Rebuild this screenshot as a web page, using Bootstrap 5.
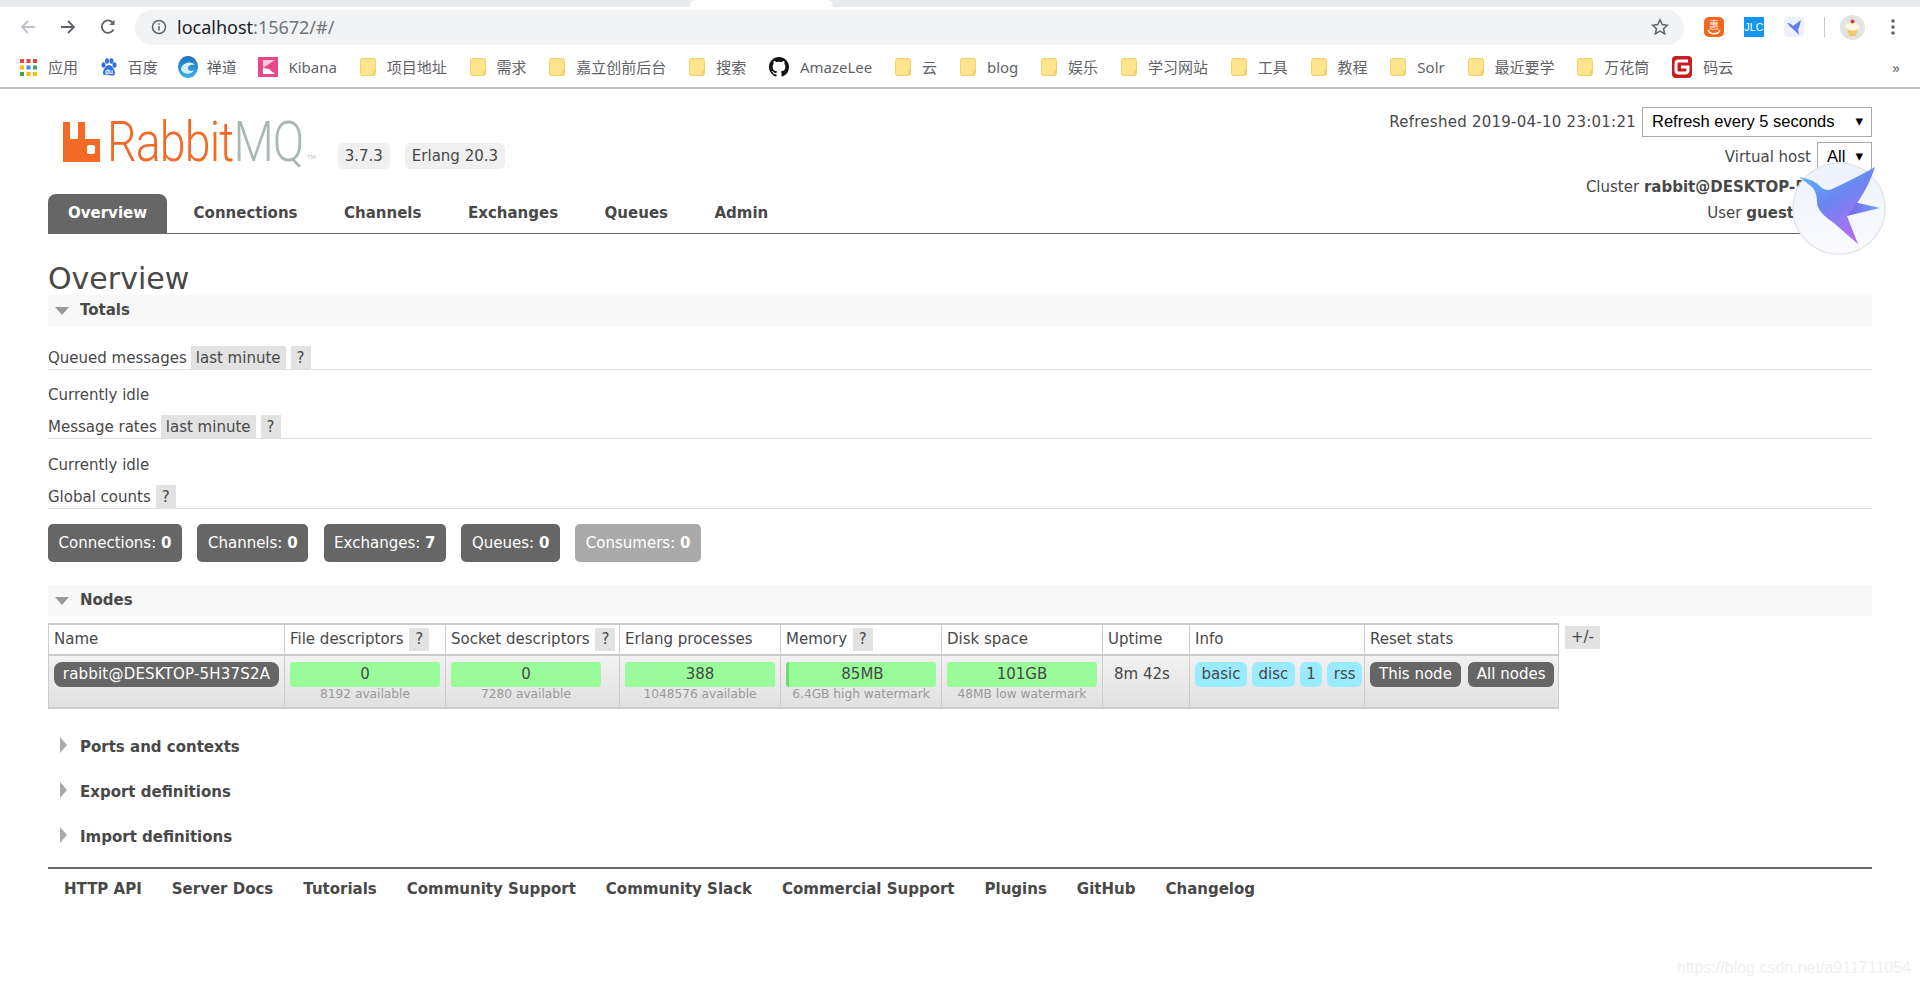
<!DOCTYPE html>
<html lang="en">
<head>
  <meta charset="UTF-8">
  <title>RabbitMQ Management</title>
  <meta name="viewport" content="width=device-width, initial-scale=1">
  <link href="https://cdn.jsdelivr.net/npm/bootstrap@5.3.0/dist/css/bootstrap.min.css" rel="stylesheet">
  <style>
    body { font-family: "DejaVu Sans", Verdana, sans-serif; font-size: 15px; color: #484848; background: #fff; height: 986px; overflow: hidden; position: relative; }

    /* browser chrome */
    .tabstrip { height: 7px; background: #e8eaed; padding-left: 690px; }
    .tabstrip span { display: block; width: 143px; height: 7px; background: #fff; border-radius: 6px 6px 0 0; }
    .toolbar { height: 40px; padding-left: 20px; }
    .tool-ico { width: 16px; height: 16px; margin-right: 24px; flex: none; }
    .urlbar { width: 1549px; height: 35px; margin-left: -5px; background: #f1f3f4; border-radius: 18px; padding: 0 15px 0 16px; font-family: "Noto Sans", sans-serif; font-size: 18px; color: #202124; flex: none; }
    .urlbar em { font-style: normal; color: #70757a; }
    .url-txt { margin-left: 10px; }
    .ext-gap { margin-left: 20px; flex: none; }
    .ext-sep { width: 1px; height: 20px; background: #c4c7ca; margin-left: 20px; flex: none; }
    .ava-ico { margin-left: 15px; flex: none; }
    .dots-ico { margin-left: 26px; flex: none; }
    .bookbar { height: 42px; border-bottom: 2px solid #bdbdbd; padding-left: 20px; padding-right: 20px; gap: 22.8px; font-family: "Noto Sans", "Noto Sans CJK SC", sans-serif; font-size: 15px; color: #5f6368; white-space: nowrap; }
    .bm { gap: 11px; }
    .bm svg { flex: none; }
    .bm-zd { gap: 9px; margin-left: -3px; }
    .bm-kb { gap: 10px; margin-left: -1px; }

    /* page */
    .wrap { padding: 0 48px; }
    .top-area { height: 105px; position: relative; }
    .logo-box { padding: 33px 0 0 15px; }
    .logo-text { display: inline-block; width: 199px; white-space: nowrap; transform: scaleX(.83); transform-origin: left center; font-family: Roboto, "Liberation Sans", sans-serif; font-weight: 300; font-size: 56px; line-height: 40px; letter-spacing: -1px; color: #f26a25; margin-left: 7px; }
    .logo-text i { font-style: normal; color: #a9b8b2; }
    .logo-tm { font-size: 6px; line-height: 10px; color: #b5bfba; align-self: flex-end; margin-left: 1px; font-family: "Liberation Sans", sans-serif; }
    .ver-pill { background: #f0f0f0; border-radius: 5px; padding: 0 7px; line-height: 26px; font-size: 15px; margin-top: 21px; }
    .ver-gap { gap: 15px; margin-left: 22px; }
    .right-info { text-align: right; line-height: 20px; padding-top: 18px; }
    .right-info > div { display: flex; justify-content: flex-end; align-items: center; }
    .stamp-txt { letter-spacing: .25px; }
    .sel-wrap { position: relative; display: inline-block; margin-left: 6px; }
    .sel-wrap select { appearance: none; border: 1px solid #aaa; border-radius: 0; background: #fff; font-family: "Liberation Sans", sans-serif; font-size: 16.5px; color: #000; padding: 0 0 2px 9px; height: 30px; display: block; }
    .sel-wrap::after { content: "\25BE"; position: absolute; right: 9px; top: 4px; font-size: 15px; color: #000; pointer-events: none; }
    .sel-refresh select { width: 230px; }
    .sel-vhost select { width: 55px; }
    .ln-vhost { margin-top: 5px; }
    .ln-cluster { margin-top: 5px; }
    .ln-user { margin-top: 6px; padding-right: 78px; }

    .tabs-row { border-bottom: 1px solid #666; height: 40px; gap: 6.5px; }
    .tabs-row a { display: block; padding: 0 20px; line-height: 38px; font-weight: 700; color: #484848; text-decoration: none; }
    .tabs-row a.on { background: #666; color: #fff; border-radius: 8px 8px 0 0; height: 40px; }

    h1.pg-title { font-size: 30px; font-weight: 400; color: #484848; line-height: 33px; margin: 28px 0 0; }
    .sec-head { background: #f8f8f8; height: 31px; line-height: 31px; font-weight: 700; padding-left: 32px; position: relative; }
    .sec-head::before { content: ""; position: absolute; left: 7px; top: 12px; border-left: 7px solid transparent; border-right: 7px solid transparent; border-top: 8px solid #999; }
    .sec-shut { font-weight: 700; height: 45px; line-height: 45px; padding-left: 32px; position: relative; }
    .sec-shut::before { content: ""; position: absolute; left: 12px; top: 12px; border-top: 8px solid transparent; border-bottom: 8px solid transparent; border-left: 7px solid #aaa; }
    .sub-head { border-bottom: 1px solid #e0e0e0; height: 24px; line-height: 25px; gap: 4px; }
    .first-sub { margin-top: 20px; }
    .hint { background: #e2e2e2; padding: 0 5px; line-height: 23px; display: inline-block; height: 23px; }
    .sub-head .hint { line-height: 25px; }
    .hint-q { margin-left: 1px; padding: 0 6px; }
    .idle-line { line-height: 20px; margin: 15px 0 10px; }
    .stat-row { gap: 15.5px; margin-top: 15px; margin-bottom: 23px; }
    .stat-btn { background: #666; color: #fff; border-radius: 5px; line-height: 38px; padding: 0 10.5px; white-space: nowrap; }
    .stat-btn.dim { background: #aaa; }

    .nodes-wrap { margin-top: 7px; gap: 6px; align-items: flex-start; }
    table.node-tbl { width: 1510px; table-layout: fixed; border-collapse: collapse; margin: 0; border: 1px solid #ccc; border-top-width: 2px; border-bottom-width: 2px; flex: none; }
    .node-tbl th { font-weight: 400; background: #fff; height: 31px; padding: 0 5px; border: 1px solid #ccc; border-bottom-width: 2px; white-space: nowrap; line-height: 23px; vertical-align: middle; color: #484848; }
    .node-tbl td { height: 53px; vertical-align: top; padding: 6px 5px 0; border: 1px solid #ccc; background: linear-gradient(#f2f2f2, #e0e0e0); white-space: nowrap; color: #484848; }
    .c-name { width: 236px; } .c-fd { width: 161px; } .c-sd { width: 174px; } .c-ep { width: 161px; }
    .c-mem { width: 161px; } .c-disk { width: 161px; } .c-up { width: 87px; } .c-inf { width: 175px; } .c-rst { width: 194px; }
    .pill-dark { display: block; text-align: center; background: #666; color: #fff; border-radius: 8px; line-height: 25px; letter-spacing: .2px; padding: 0 5px; width: 225px; }
    .meter-box { width: 150px; text-align: center; }
    .meter { background: #99fb99; border-radius: 3px; height: 25px; line-height: 25px; }
    .meter-mem { border-left: 3px solid #6fdc6f; }
    .sub-note { font-size: 12.2px; color: #999; line-height: 14px; }
    .up-val { line-height: 25px; padding-left: 6px; }
    .inf-pills { gap: 5px; }
    .inf-pills span { background: #99ebff; border-radius: 6px; line-height: 25px; padding: 0 6.5px; }
    .rst-pills { gap: 7px; }
    .rst-pills span { background: #666; color: #fff; border-radius: 6px; line-height: 25px; padding: 0 9px; }
    .plus-minus { background: #e2e2e2; line-height: 23px; padding: 0 6px; margin-top: 3px; white-space: nowrap; }
    .shut-list { margin-top: 16px; }
    .foot-row { border-top: 2px solid #666; margin-top: 7px; padding: 10px 16px; gap: 30px; font-weight: 700; line-height: 20px; }
    .foot-row a { color: #484848; text-decoration: none; white-space: nowrap; }

    /* overlays */
    .bird-float { position: absolute; left: 1792px; top: 162px; width: 94px; height: 93px; }
    .csdn-mark { position: absolute; right: 9px; top: 956px; font-family: "Liberation Sans", sans-serif; font-size: 16px; color: #efefef; }
  </style>
</head>
<body>
  <svg width="0" height="0" class="position-absolute">
    <symbol id="fold" viewBox="0 0 16 18">
      <rect x=".5" y=".5" width="15" height="17" rx="2" fill="#fee48c" stroke="#f3d06b"/>
      <path d="M15 11v5a1.500 1.500 0 0 1-1.500 1.500H11c2.500 0 1.500-5 4-6.500z" fill="#f3cf66"/>
    </symbol>
  </svg>

  <!-- browser chrome -->
  <div class="tabstrip"><span></span></div>
  <div class="toolbar d-flex align-items-center">
    <svg class="tool-ico" viewBox="0 0 16 16" fill="none" stroke="#bdc1c6" stroke-width="1.800"><path d="M15 8H2M8 2 2 8l6 6"/></svg>
    <svg class="tool-ico" viewBox="0 0 16 16" fill="none" stroke="#5f6368" stroke-width="1.800"><path d="M1 8h13M8 2l6 6-6 6"/></svg>
    <svg class="tool-ico" viewBox="0 0 16 16" fill="none" stroke="#5f6368" stroke-width="1.800"><path d="M13.500 10.500A6.200 6.200 0 1 1 13 4"/><path d="M14.500 .8v5.200H9.300z" fill="#5f6368" stroke="none"/></svg>
    <div class="urlbar d-flex align-items-center">
      <svg width="16" height="16" viewBox="0 0 16 16" fill="none" stroke="#5f6368" stroke-width="1.500"><circle cx="8" cy="8" r="6.500"/><path d="M8 7v4.500M8 4.200v1.500"/></svg>
      <span class="url-txt">localhost<em>:15672/#/</em></span>
      <svg class="ms-auto" width="18" height="18" viewBox="0 0 18 18" fill="none" stroke="#5f6368" stroke-width="1.500"><path d="m9 1.800 2.200 4.800 5.200.6-3.900 3.500 1.100 5.100L9 13.200l-4.600 2.600 1.100-5.100L1.600 7.200l5.200-.6z"/></svg>
    </div>
    <svg class="ext-gap" width="20" height="20" viewBox="0 0 20 20"><rect width="20" height="20" rx="5" fill="#f4661b"/><text x="10" y="11.500" text-anchor="middle" font-size="10" font-family="Noto Sans CJK SC" fill="#fff">惠</text><path d="M4 13c2 5 10 5 12 0" fill="none" stroke="#fff" stroke-width="1.500"/></svg>
    <svg class="ext-gap" width="20" height="20" viewBox="0 0 20 20"><rect width="20" height="20" fill="#1296f0"/><text x=".6" y="14" font-size="10.500" font-family="Liberation Sans" fill="#fff">JLC</text></svg>
    <svg class="ext-gap" width="20" height="20" viewBox="0 0 20 20"><rect width="20" height="20" rx="4" fill="#eef1fb"/><path d="M3 6q4 0 6 3l8-6-2 8-1 1 1 6-5-5Q6 10 3 6z" fill="#5f7df0"/></svg>
    <span class="ext-sep"></span>
    <svg class="ava-ico" width="25" height="25" viewBox="0 0 25 25"><circle cx="12.500" cy="12.500" r="12.500" fill="#e3e3e3"/><path d="M7 13h11l-2 8H9z" fill="#f4c76b"/><ellipse cx="12.500" cy="11.500" rx="7" ry="4" fill="#fdf6e3"/><circle cx="12.500" cy="6.500" r="2" fill="#c8423c"/></svg>
    <svg class="dots-ico" width="4" height="18" viewBox="0 0 4 18"><g fill="#5f6368"><circle cx="2" cy="3" r="1.800"/><circle cx="2" cy="9" r="1.800"/><circle cx="2" cy="15" r="1.800"/></g></svg>
  </div>
  <div class="bookbar d-flex align-items-center">
    <span class="bm d-flex align-items-center">
      <svg width="17" height="17" viewBox="0 0 17 17"><rect width="4" height="4" fill="#ea4335"/><rect x="6.500" width="4" height="4" fill="#ea4335"/><rect x="13" width="4" height="4" fill="#ea4335"/><rect y="6.500" width="4" height="4" fill="#fbbc05"/><rect x="6.500" y="6.500" width="4" height="4" fill="#4285f4"/><rect x="13" y="6.500" width="4" height="4" fill="#34a853"/><rect y="13" width="4" height="4" fill="#34a853"/><rect x="6.500" y="13" width="4" height="4" fill="#fbbc05"/><rect x="13" y="13" width="4" height="4" fill="#fbbc05"/></svg>应用</span>
    <span class="bm d-flex align-items-center">
      <svg width="16" height="18" viewBox="0 0 16 18"><g fill="#2f6fe0"><ellipse cx="2.500" cy="7" rx="2" ry="2.800"/><ellipse cx="6" cy="3" rx="2" ry="2.800"/><ellipse cx="10.500" cy="3" rx="2" ry="2.800"/><ellipse cx="13.500" cy="7" rx="2" ry="2.800"/><path d="M8 7c3 0 6 5 6 8s-3 3-6 2-6 1-6-2 3-8 6-8z"/></g><text x="8" y="15.500" text-anchor="middle" font-size="6.500" font-weight="700" font-family="Liberation Sans" fill="#fff">du</text></svg>百度</span>
    <span class="bm bm-zd d-flex align-items-center">
      <svg width="20" height="22" viewBox="0 0 20 22"><defs><linearGradient id="zd" x1="0" y1="0" x2="0" y2="1"><stop offset="0" stop-color="#1f6fb8"/><stop offset="1" stop-color="#3bb2e8"/></linearGradient></defs><ellipse cx="10" cy="11" rx="10" ry="11" fill="url(#zd)"/><path d="M3 13c1-6 10-9 14-4-3-1-7 0-7 3s3 4 6 2c-2 5-12 5-13-1z" fill="#d5f0fb"/></svg>禅道</span>
    <span class="bm bm-kb d-flex align-items-center">
      <svg width="20" height="20" viewBox="0 0 20 20"><rect width="20" height="20" fill="#e8488b"/><path d="M5 3h12L5 11z" fill="#f9c8db"/><path d="M5 11l6 1 6 5H5z" fill="#fff"/></svg>Kibana</span>
    <span class="bm d-flex align-items-center"><svg width="16" height="18"><use href="#fold"/></svg>项目地址</span>
    <span class="bm d-flex align-items-center"><svg width="16" height="18"><use href="#fold"/></svg>需求</span>
    <span class="bm d-flex align-items-center"><svg width="16" height="18"><use href="#fold"/></svg>嘉立创前后台</span>
    <span class="bm d-flex align-items-center"><svg width="16" height="18"><use href="#fold"/></svg>搜索</span>
    <span class="bm d-flex align-items-center">
      <svg width="20" height="20" viewBox="0 0 16 16" fill="#111"><path d="M8 0C3.580 0 0 3.580 0 8c0 3.540 2.290 6.530 5.470 7.590.4.070.55-.17.55-.38 0-.19-.01-.82-.01-1.490-2.010.37-2.530-.49-2.690-.94-.09-.23-.48-.94-.82-1.130-.28-.15-.68-.52-.01-.53.63-.01 1.080.58 1.230.82.72 1.210 1.870.87 2.330.66.07-.52.28-.87.51-1.070-1.780-.2-3.640-.89-3.640-3.950 0-.87.31-1.590.82-2.150-.08-.2-.36-1.020.08-2.120 0 0 .67-.21 2.200.82.64-.18 1.320-.27 2-.27.68 0 1.360.09 2 .27 1.530-1.040 2.200-.82 2.200-.82.44 1.100.16 1.920.08 2.120.51.56.82 1.270.82 2.150 0 3.070-1.870 3.750-3.650 3.950.29.25.54.73.54 1.480 0 1.070-.01 1.930-.01 2.200 0 .21.15.46.55.38A8.013 8.013 0 0 0 16 8c0-4.420-3.580-8-8-8z"/></svg>AmazeLee</span>
    <span class="bm d-flex align-items-center"><svg width="16" height="18"><use href="#fold"/></svg>云</span>
    <span class="bm d-flex align-items-center"><svg width="16" height="18"><use href="#fold"/></svg>blog</span>
    <span class="bm d-flex align-items-center"><svg width="16" height="18"><use href="#fold"/></svg>娱乐</span>
    <span class="bm d-flex align-items-center"><svg width="16" height="18"><use href="#fold"/></svg>学习网站</span>
    <span class="bm d-flex align-items-center"><svg width="16" height="18"><use href="#fold"/></svg>工具</span>
    <span class="bm d-flex align-items-center"><svg width="16" height="18"><use href="#fold"/></svg>教程</span>
    <span class="bm d-flex align-items-center"><svg width="16" height="18"><use href="#fold"/></svg>Solr</span>
    <span class="bm d-flex align-items-center"><svg width="16" height="18"><use href="#fold"/></svg>最近要学</span>
    <span class="bm d-flex align-items-center"><svg width="16" height="18"><use href="#fold"/></svg>万花筒</span>
    <span class="bm d-flex align-items-center">
      <svg width="20" height="22" viewBox="0 0 20 22"><rect width="20" height="22" rx="4" fill="#c71d23"/><path d="M16 5H6.500Q4 5 4 7.500v7Q4 17 6.500 17H13q3 0 3-3v-3H9" fill="none" stroke="#fff" stroke-width="3"/></svg>码云</span>
    <span class="ms-auto">»</span>
  </div>

  <!-- page -->
  <div class="wrap">
    <div class="top-area d-flex justify-content-between">
      <div class="logo-box d-flex align-items-start">
        <div class="d-flex align-items-start">
          <svg width="37" height="40" viewBox="0 0 37 40" class="flex-none"><path fill-rule="evenodd" fill="#f26a25" d="M0 0h7v17h8V0h7v17h15v23H0zM24 25v5a2 2 0 0 0 2 2h4a2 2 0 0 0 2-2v-5a2 2 0 0 0-2-2h-4a2 2 0 0 0-2 2z"/></svg>
          <span class="logo-text">Rabbit<i>MQ</i></span><span class="logo-tm">TM</span>
        </div>
        <div class="d-flex ver-gap">
          <span class="ver-pill">3.7.3</span>
          <span class="ver-pill">Erlang 20.3</span>
        </div>
      </div>
      <div class="right-info">
        <div><span class="stamp-txt">Refreshed 2019-04-10 23:01:21</span><span class="sel-wrap sel-refresh"><select><option>Refresh every 5 seconds</option></select></span></div>
        <div class="ln-vhost">Virtual host<span class="sel-wrap sel-vhost"><select><option>All</option></select></span></div>
        <div class="ln-cluster"><span>Cluster <b>rabbit@DESKTOP-5H37S2A</b></span></div>
        <div class="ln-user"><span>User <b>guest</b></span></div>
      </div>
    </div>

    <nav class="tabs-row d-flex">
      <a class="on" href="#">Overview</a>
      <a href="#">Connections</a>
      <a href="#">Channels</a>
      <a href="#">Exchanges</a>
      <a href="#">Queues</a>
      <a href="#">Admin</a>
    </nav>

    <h1 class="pg-title">Overview</h1>
    <div class="sec-head">Totals</div>

    <div class="sub-head first-sub d-flex"><span>Queued messages</span> <span class="hint">last minute</span><span class="hint hint-q">?</span></div>
    <div class="idle-line">Currently idle</div>
    <div class="sub-head d-flex"><span>Message rates</span> <span class="hint">last minute</span><span class="hint hint-q">?</span></div>
    <div class="idle-line mt-3">Currently idle</div>
    <div class="sub-head d-flex"><span>Global counts</span> <span class="hint hint-q">?</span></div>

    <div class="stat-row d-flex">
      <span class="stat-btn">Connections: <b>0</b></span>
      <span class="stat-btn">Channels: <b>0</b></span>
      <span class="stat-btn">Exchanges: <b>7</b></span>
      <span class="stat-btn">Queues: <b>0</b></span>
      <span class="stat-btn dim">Consumers: <b>0</b></span>
    </div>

    <div class="sec-head">Nodes</div>
    <div class="nodes-wrap d-flex">
      <table class="table node-tbl">
        <thead>
          <tr>
            <th class="c-name">Name</th>
            <th class="c-fd">File descriptors <span class="hint hint-q">?</span></th>
            <th class="c-sd">Socket descriptors <span class="hint hint-q">?</span></th>
            <th class="c-ep">Erlang processes</th>
            <th class="c-mem">Memory <span class="hint hint-q">?</span></th>
            <th class="c-disk">Disk space</th>
            <th class="c-up">Uptime</th>
            <th class="c-inf">Info</th>
            <th class="c-rst">Reset stats</th>
          </tr>
        </thead>
        <tbody>
          <tr>
            <td><span class="pill-dark">rabbit@DESKTOP-5H37S2A</span></td>
            <td><div class="meter-box"><div class="meter">0</div><div class="sub-note">8192 available</div></div></td>
            <td><div class="meter-box"><div class="meter">0</div><div class="sub-note">7280 available</div></div></td>
            <td><div class="meter-box"><div class="meter">388</div><div class="sub-note">1048576 available</div></div></td>
            <td><div class="meter-box"><div class="meter meter-mem">85MB</div><div class="sub-note">6.4GB high watermark</div></div></td>
            <td><div class="meter-box"><div class="meter">101GB</div><div class="sub-note">48MB low watermark</div></div></td>
            <td><div class="up-val">8m 42s</div></td>
            <td><div class="inf-pills d-flex"><span>basic</span><span>disc</span><span>1</span><span>rss</span></div></td>
            <td><div class="rst-pills d-flex"><span>This node</span><span>All nodes</span></div></td>
          </tr>
        </tbody>
      </table>
      <span class="plus-minus">+/-</span>
    </div>

    <div class="shut-list">
      <div class="sec-shut">Ports and contexts</div>
      <div class="sec-shut">Export definitions</div>
      <div class="sec-shut">Import definitions</div>
    </div>

    <div class="foot-row d-flex">
      <a href="#">HTTP API</a>
      <a href="#">Server Docs</a>
      <a href="#">Tutorials</a>
      <a href="#">Community Support</a>
      <a href="#">Community Slack</a>
      <a href="#">Commercial Support</a>
      <a href="#">Plugins</a>
      <a href="#">GitHub</a>
      <a href="#">Changelog</a>
    </div>
  </div>

  <!-- floating widget over the page -->
  <svg class="bird-float" viewBox="0 0 94 93">
    <defs>
      <linearGradient id="birdBg" x1="0" y1="0" x2="0" y2="1"><stop offset="0" stop-color="#edf2fd"/><stop offset="1" stop-color="#fbfbfe"/></linearGradient>
      <linearGradient id="birdBody" x1="0" y1="0" x2=".6" y2="1"><stop offset="0" stop-color="#56bdff"/><stop offset=".5" stop-color="#6a86f2"/><stop offset="1" stop-color="#b56cf2"/></linearGradient>
      <linearGradient id="birdTail" x1="0" y1="0" x2="1" y2="0"><stop offset="0" stop-color="#7a62ea"/><stop offset="1" stop-color="#69a6fb"/></linearGradient>
    </defs>
    <ellipse cx="47" cy="46.500" rx="46" ry="45.500" fill="url(#birdBg)" stroke="#e3e6ee" stroke-width="1.500"/>
    <path d="M62 40 88 46 55 54z" fill="url(#birdTail)"/>
    <path d="M7 15Q22 17 30 26 36 30 42 26 60 18 83 5 78 20 72 30 64 44 55 54L66 82Q52 70 42 61 25 50 25 40 25 30 20 25 14 20 7 15z" fill="url(#birdBody)"/>
  </svg>
  <div class="csdn-mark">https://blog.csdn.net/a911711054</div>
</body>
</html>
